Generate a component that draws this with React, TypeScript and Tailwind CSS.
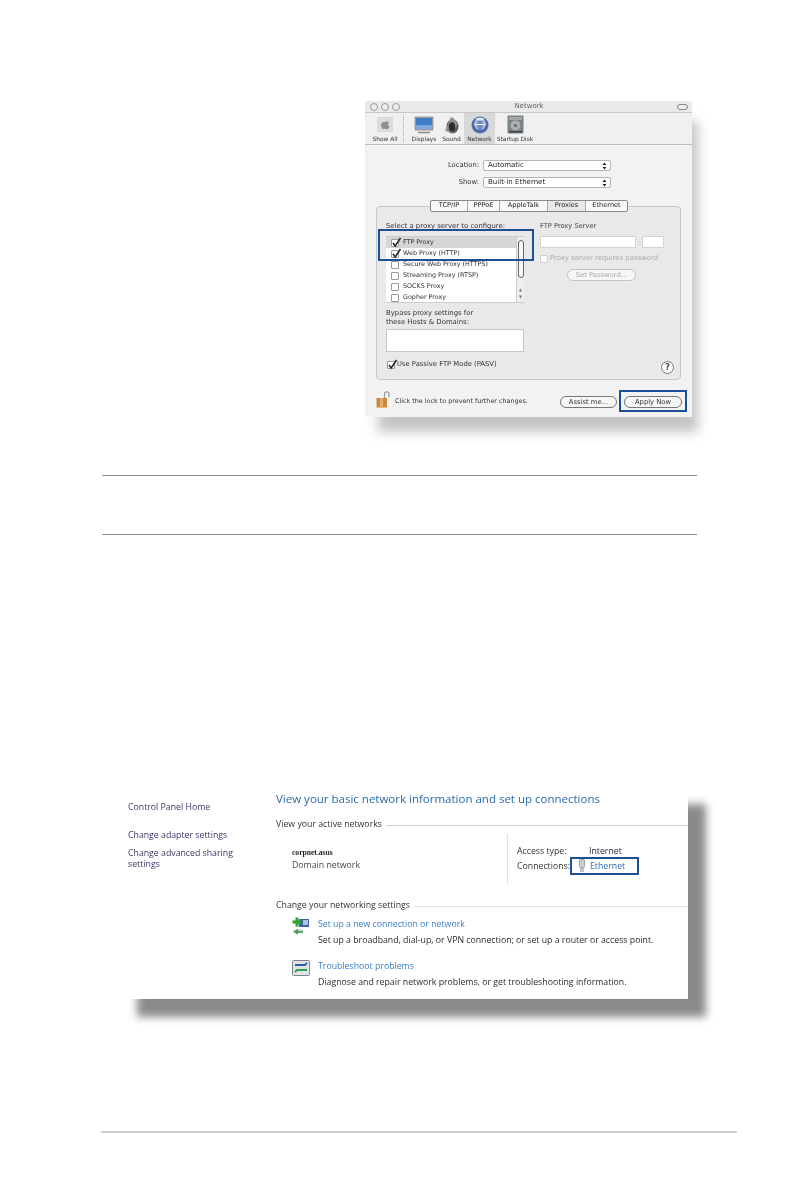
import React from "react";

const mac = { fontFamily: '"DejaVu Sans", Verdana, sans-serif' };
const win = { fontFamily: '"Open Sans", "Noto Sans", sans-serif' };

function Check({ checked, disabled }: { checked?: boolean; disabled?: boolean }) {
  return (
    <span className={`relative block w-[8px] h-[8px] shrink-0 rounded-[1px] border bg-white ${disabled ? "border-[#d0d0d0]" : "border-[#9a9a9a]"}`}>
      {checked && (
        <svg className="absolute left-[-1px] top-[-3px]" width="11" height="11" viewBox="0 0 11 11">
          <path d="M2 6 L4.2 9 L9.5 1" fill="none" stroke="#222" strokeWidth="1.5" />
        </svg>
      )}
    </span>
  );
}

function Select({ label, value }: { label: string; value: string }) {
  return (
    <div className="flex items-center h-[11px]">
      <span className="w-[118px] text-right pr-[4px] text-[6.8px] text-[#333]">{label}</span>
      <div className="w-[128px] h-[11px] flex items-center justify-between bg-white border border-[#b5b5b5] rounded-[2px] pl-[4px] pr-[3px] text-[7px] text-[#222]">
        <span>{value}</span>
        <svg width="5" height="8" viewBox="0 0 5 8"><path d="M2.5 0.5 L4.5 3 H0.5Z M2.5 7.5 L4.5 5 H0.5Z" fill="#222" /></svg>
      </div>
    </div>
  );
}

function Tool({ label, w, active, children }: { label: string; w: number; active?: boolean; children: React.ReactNode }) {
  return (
    <div className={`flex flex-col items-center pt-[1px] h-[31px] ${active ? "bg-[#d8d8d8]" : ""}`} style={{ width: w }}>
      <div className="h-[21px] flex items-center justify-center">{children}</div>
      <span className="text-[5.9px] leading-[8px] text-[#333] whitespace-nowrap">{label}</span>
    </div>
  );
}

function Row({ label, checked, selected }: { label: string; checked?: boolean; selected?: boolean }) {
  return (
    <div className={`h-[11px] flex items-center pl-[5px] gap-[4px] text-[6.4px] text-[#333] ${selected ? "bg-[#d6d6d6]" : ""}`}>
      <Check checked={checked} />
      <span className="whitespace-nowrap">{label}</span>
    </div>
  );
}

function Pill({ children, w, dim }: { children: React.ReactNode; w: number; dim?: boolean }) {
  return (
    <div style={{ width: w }} className={`h-[12px] rounded-full border flex items-center justify-center text-[6.8px] bg-[#f6f6f6] ${dim ? "border-[#c4c4c4] text-[#aaa]" : "border-[#777] text-[#333]"}`}>
      {children}
    </div>
  );
}

function MacWindow() {
  return (
    <div className="relative w-[327px] ml-[365px] blur-[0.35px]" style={mac}>
      <div className="absolute left-[13px] top-[20px] w-[320px] h-[311px] bg-[#c4c4c4] blur-[6px]" />
      <div className="relative h-[316px] bg-[#f2f2f2] flex flex-col">
        <div className="h-[12px] bg-[#e9e9e9] border-b border-[#c8c8c8] rounded-t-[4px] grid grid-cols-[1fr_auto_1fr] items-center pl-[5px] pr-[4px]">
          <div className="flex gap-[3px]">
            <span className="w-[8px] h-[8px] rounded-full bg-[#ececec] border border-[#999]" />
            <span className="w-[8px] h-[8px] rounded-full bg-[#ececec] border border-[#999]" />
            <span className="w-[8px] h-[8px] rounded-full bg-[#ececec] border border-[#999]" />
          </div>
          <span className="text-[7px] text-[#666]">Network</span>
          <span className="justify-self-end w-[11px] h-[6px] rounded-full border border-[#888] bg-[#eee]" />
        </div>
        <div className="h-[32px] bg-[#f0f0f0] border-b border-[#bcbcbc] flex pl-[5px]">
          <Tool label="Show All" w={30}>
            <svg width="16" height="15" viewBox="0 0 16 15"><rect width="16" height="15" fill="#dcdcd6" /><path d="M8 5 C9.500 4 11.500 4.500 12 5.500 C10.500 6.500 10.500 9 12.500 9.500 C11.500 12 10.500 12.500 9 12 C8.300 11.800 7.500 11.800 7 12 C5.500 12.500 4 10 4 8 C4 5.500 6.500 4.500 8 5Z" fill="#8d8d8d" /></svg>
          </Tool>
          <div className="w-[9px] my-[2px] flex"><span className="w-[4px] border-r border-dotted border-[#aaa]" /></div>
          <Tool label="Displays" w={30}>
            <svg width="20" height="18" viewBox="0 0 20 18"><rect x="0.500" y="0.500" width="19" height="14" rx="1" fill="#9a9ba1" /><rect x="2" y="2" width="16" height="11" fill="#3f7cc6" /><rect x="2" y="9" width="16" height="4" fill="#7fa9dc" /><path d="M4 16.500h12" stroke="#888" strokeWidth="1.500" /></svg>
          </Tool>
          <Tool label="Sound" w={25}>
            <svg width="15" height="18" viewBox="0 0 15 18"><ellipse cx="8.500" cy="10.500" rx="6" ry="7" fill="#5a5a5a" /><path d="M1 15 C3.500 10 5 5 7 1 C10 2 12 5 13.500 8 L9 17Z" fill="#8f8f8c" /><ellipse cx="8" cy="11" rx="3.200" ry="4.800" fill="#2c2c2c" /></svg>
          </Tool>
          <Tool label="Network" w={31} active>
            <svg width="18" height="18" viewBox="0 0 18 18"><circle cx="9" cy="9" r="8.500" fill="#4f6aa8" /><circle cx="9" cy="8" r="6" fill="#a9b8da" /><ellipse cx="9" cy="8.500" rx="2.800" ry="5.500" fill="#6f8bc2" /><path d="M3.500 8.500h11" stroke="#e8edf6" strokeWidth="1" /><ellipse cx="9" cy="3" rx="4" ry="1.500" fill="#dfe5f2" /></svg>
          </Tool>
          <Tool label="Startup Disk" w={40}>
            <svg width="17" height="19" viewBox="0 0 17 19"><rect x="0.500" y="0.500" width="16" height="18" rx="1" fill="#7b8285" /><rect x="2" y="2" width="13" height="3" fill="#a3a9ab" /><circle cx="8.500" cy="10.500" r="5" fill="#a9afb1" /><circle cx="8.500" cy="10.500" r="1.500" fill="#5d6366" /><rect x="2" y="16" width="13" height="1.500" fill="#3c4143" /></svg>
          </Tool>
        </div>

        <div className="flex flex-col gap-[6px] mt-[15px]">
          <Select label="Location:" value="Automatic" />
          <Select label="Show:" value="Built-in Ethernet" />
        </div>

        <div className="relative mt-[18px] mx-[11px] h-[174px] bg-[#e9e9e9] border border-[#c6c6c6] rounded-[4px] flex">
          <div className="absolute left-[53px] top-[-7px] w-[198px] h-[12px] flex bg-[#f8f8f8] border border-[#8a8a8a] rounded-[2px] text-[6.6px] text-[#222] divide-x divide-[#aaa]">
            <span className="w-[37px] flex items-center justify-center">TCP/IP</span>
            <span className="w-[32px] flex items-center justify-center">PPPoE</span>
            <span className="w-[48px] flex items-center justify-center">AppleTalk</span>
            <span className="w-[38px] flex items-center justify-center bg-[#e8e8e8]">Proxies</span>
            <span className="flex-1 flex items-center justify-center">Ethernet</span>
          </div>
          <div className="w-[154px] ml-[9px] pt-[15px] flex flex-col">
            <p className="h-[14px] text-[6.9px] leading-[8px] text-[#333] whitespace-nowrap">Select a proxy server to configure:</p>
            <div className="relative w-[138px] h-[67px] bg-white border-y border-[#ccc] overflow-hidden">
              <Row label="FTP Proxy" checked selected />
              <Row label="Web Proxy (HTTP)" checked />
              <Row label="Secure Web Proxy (HTTPS)" />
              <Row label="Streaming Proxy (RTSP)" />
              <Row label="SOCKS Proxy" />
              <Row label="Gopher Proxy" />
              <div className="absolute right-0 top-0 bottom-0 w-[8px] bg-[#eeeeee] border-l border-[#ccc]">
                <div className="mx-auto mt-[3px] w-[6px] h-[38px] rounded-full bg-[#f8f8f8] border border-[#666]" />
                <div className="mt-[8px] text-center text-[4px] leading-[7px] text-[#777]">▲<br />▼</div>
              </div>
            </div>
            <p className="mt-[6px] text-[6.9px] leading-[9px] text-[#333]">Bypass proxy settings for<br />these Hosts &amp; Domains:</p>
            <div className="mt-[2px] w-[138px] h-[23px] bg-white border border-[#c8c8c8]" />
            <div className="mt-[8px] h-[9px] flex items-center gap-[2px] pl-[1px] text-[6.8px] text-[#333]">
              <Check checked />
              <span className="whitespace-nowrap">Use Passive FTP Mode (PASV)</span>
            </div>
          </div>
          <div className="flex-1 pt-[15px] flex flex-col">
            <p className="h-[14px] text-[6.7px] leading-[8px] text-[#444]">FTP Proxy Server</p>
            <div className="flex items-center h-[12px]">
              <div className="w-[96px] h-[12px] bg-white border border-[#d4d4d4]" />
              <span className="w-[6px] text-center text-[6px] text-[#aaa]">:</span>
              <div className="w-[22px] h-[12px] bg-white border border-[#d4d4d4]" />
            </div>
            <div className="mt-[6px] h-[9px] flex items-center gap-[2px] text-[6.9px] text-[#aaa]">
              <Check disabled />
              <span className="whitespace-nowrap">Proxy server requires password</span>
            </div>
            <div className="mt-[6px] ml-[27px]"><Pill w={69} dim>Set Password...</Pill></div>
            <div className="relative flex-1">
              <span className="absolute right-[6px] bottom-[5px] w-[13px] h-[13px] rounded-full border border-[#777] bg-white flex items-center justify-center text-[8px] font-bold text-[#444]">?</span>
            </div>
          </div>
        </div>

        <div className="flex items-center h-[17px] mt-[11px] pl-[11px]">
          <svg width="15" height="17" viewBox="0 0 15 17" className="shrink-0"><path d="M8.500 7 V3 C8.500 0 13 0 13 3 V6" fill="none" stroke="#999" strokeWidth="1.200" /><rect x="0.500" y="7" width="10.500" height="9.500" fill="#c98a3e" /><rect x="4" y="7" width="3" height="9.500" fill="#e2ad6c" /></svg>
          <span className="ml-[4px] w-[165px] mt-[5px] text-[6.4px] text-[#333] whitespace-nowrap">Click the lock to prevent further changes.</span>
          <div className="mt-[5px]"><Pill w={57}>Assist me...</Pill></div>
          <div className="ml-[7px] mt-[5px]"><Pill w={58}>Apply Now</Pill></div>
        </div>
      </div>
      <div className="absolute left-[13px] top-[128px] w-[156px] h-[32px] border-2 border-[#1c4f94]" />
      <div className="absolute left-[254px] top-[289px] w-[68px] h-[22px] border-2 border-[#1c4f94]" />
    </div>
  );
}

function Plug() {
  return (
    <svg width="8" height="14" viewBox="0 0 8 14"><rect x="1.500" y="0.500" width="5" height="8" rx="1" fill="#c9ced4" stroke="#7d8894" strokeWidth="0.700" /><path d="M3 9v4M5 9v4" stroke="#6d8fb0" strokeWidth="1" /></svg>
  );
}

function WinWindow() {
  return (
    <div className="relative w-[563px] ml-[125px]" style={win}>
      <div className="absolute left-[12px] top-[12px] w-[569px] h-[213px] bg-[#8a8a8a] blur-[4px]" />
      <div className="relative h-[207px] bg-white">
        <div className="h-full flex text-[8.75px] text-[#2b2b2b] blur-[0.3px]">
          <div className="w-[151px] pl-[3px] pt-[9px] flex flex-col text-[#3a3566]">
            <p className="leading-[12px]">Control Panel Home</p>
            <p className="mt-[16px] leading-[12px]">Change adapter settings</p>
            <p className="mt-[7px] leading-[11px]">Change advanced sharing<br />settings</p>
          </div>
          <div className="flex-1 flex flex-col">
            <h1 className="text-[11.5px] leading-[14px] text-[#2a6aa9] font-normal whitespace-nowrap">View your basic network information and set up connections</h1>
            <div className="mt-[13px] flex items-center gap-[4px] h-[12px]">
              <span className="whitespace-nowrap text-[#333]">View your active networks</span>
              <span className="flex-1 h-px bg-[#d0d0d0]" />
            </div>
            <div className="flex mt-[3px] h-[50px]">
              <div className="w-[231px] pl-[16px] pt-[12px] leading-[13px]">
                <p className="font-bold text-[7.6px] text-[#222]" style={{ fontFamily: '"Liberation Serif", serif' }}>corpnet.asus</p>
                <p className="text-[#444]">Domain network</p>
              </div>
              <div className="border-l border-[#e0e0e0] pl-[9px] pt-[11px] leading-[13px] flex-1">
                <div className="flex"><span className="w-[72px] text-[#333]">Access type:</span><span className="text-[#2a1a3a]">Internet</span></div>
                <div className="flex items-center mt-[1px]">
                  <span className="w-[61px] text-[#333] whitespace-nowrap">Connections:</span>
                  <Plug />
                  <span className="ml-[4px] text-[#2c6bb8]">Ethernet</span>
                </div>
              </div>
            </div>
            <div className="mt-[16px] flex items-center gap-[4px] h-[12px]">
              <span className="whitespace-nowrap text-[#333]">Change your networking settings</span>
              <span className="flex-1 h-px bg-[#e2e2e2]" />
            </div>
            <div className="mt-[5px] flex gap-[8px] pl-[16px]">
              <svg width="18" height="18" viewBox="0 0 18 18" className="shrink-0"><rect x="7" y="2" width="10" height="8" fill="#3f62ad" /><rect x="11" y="3" width="5" height="5" fill="#a9c3ea" /><path d="M3.500 0.500h3v3h3v3h-3v3h-3v-3h-3v-3h3z" fill="#2fa12f" /><path d="M1 14h10" stroke="#c8ccd0" strokeWidth="3" /><path d="M3 15h8M6 12.500l-3 2.500 3 2" fill="none" stroke="#35a04a" strokeWidth="1.500" /></svg>
              <div className="leading-[15.500px]">
                <p className="text-[#3a7fc4] whitespace-nowrap">Set up a new connection or network</p>
                <p className="whitespace-nowrap">Set up a broadband, dial-up, or VPN connection; or set up a router or access point.</p>
              </div>
            </div>
            <div className="mt-[11px] flex gap-[8px] pl-[16px]">
              <svg width="18" height="16" viewBox="0 0 18 16" className="shrink-0 mt-[1px]"><rect x="0.500" y="0.500" width="17" height="15" rx="1" fill="#dfe3e6" stroke="#7f858a" /><path d="M3 5h10l2-2" fill="none" stroke="#2f5f9f" strokeWidth="1.800" /><path d="M15 10H5l-2 2" fill="none" stroke="#2f9f50" strokeWidth="1.800" /></svg>
              <div className="leading-[15.500px]">
                <p className="text-[#3a7fc4] whitespace-nowrap">Troubleshoot problems</p>
                <p className="whitespace-nowrap">Diagnose and repair network problems, or get troubleshooting information.</p>
              </div>
            </div>
          </div>
        </div>
      </div>
      <div className="absolute left-[445px] top-[65px] w-[69px] h-[18px] border-2 border-[#1c4f94]" />
    </div>
  );
}

export default function App() {
  return (
    <div className="w-[794px] h-[1196px] bg-white overflow-hidden pt-[101px]">
      <MacWindow />
      <div className="mt-[58px] ml-[102px] w-[595px] h-[60px] border-y border-[#8f8f8f]" />
      <div className="mt-[257px]"><WinWindow /></div>
      <div className="mt-[132px] ml-[101px] w-[636px] h-[2px] bg-[#cfcfcf]" />
    </div>
  );
}
